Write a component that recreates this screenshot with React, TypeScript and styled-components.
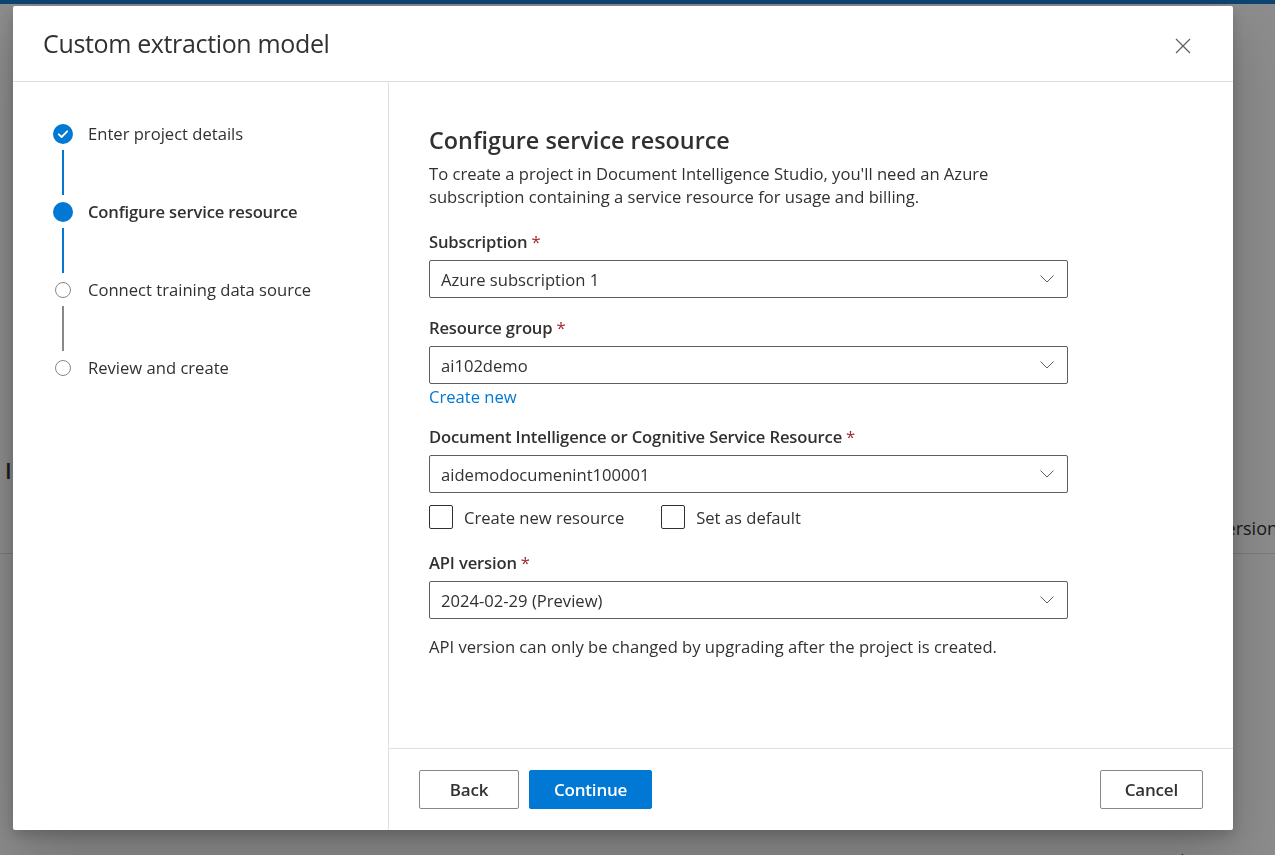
import React from "react";
import styled, { createGlobalStyle } from "styled-components";

const FONT = `"Open Sans", "Noto Sans", "Liberation Sans", sans-serif`;

const GlobalStyle = createGlobalStyle`
  html, body {
    margin: 0;
    padding: 0;
    overflow: hidden;
    font-family: ${FONT};
    color: #323130;
  }
  * { box-sizing: border-box; }
`;

/* ---------- background page (behind the modal) ---------- */
const Page = styled.div`
  width: 100vw;
  min-height: 869px;
  background: #ffffff;
  display: flex;
  flex-direction: column;
  overflow: hidden;
`;

const TopBar = styled.div`
  height: 4px;
  flex: none;
  background: #1a7bd0;
`;

const PageMain = styled.main`
  flex: 1;
  display: flex;
  flex-direction: column;
  padding-top: 451px;
`;

const PageHeading = styled.h2`
  margin: 0 0 0 5px;
  font-size: 22px;
  line-height: 30px;
  font-weight: 600;
  color: #323130;
`;

const TableHead = styled.div`
  margin-top: 18px;
  width: 1300px;
  height: 51px;
  display: flex;
  align-items: center;
  justify-content: flex-end;
  padding-right: 22px;
  border-bottom: 1px solid #e1dfdd;
  font-size: 18px;
  color: #323130;
`;

const PageFooter = styled.footer`
  height: 20px;
  flex: none;
  display: flex;
  justify-content: flex-end;
  font-size: 15px;
  line-height: 20px;
  color: #323130;
  width: 1310px;
`;

/* ---------- modal ---------- */
const Overlay = styled.div`
  position: fixed;
  inset: 0;
  background: rgba(0, 0, 0, 0.45);
  display: flex;
  align-items: flex-start;
  padding: 6px 0 0 13px;
`;

const Dialog = styled.div`
  width: 1220px;
  height: 824px;
  background: #ffffff;
  border-radius: 2px;
  display: flex;
  flex-direction: column;
  box-shadow: 0 25px 58px rgba(0, 0, 0, 0.22), 0 5px 14px rgba(0, 0, 0, 0.18);
  overflow: hidden;
`;

const DialogHeader = styled.header`
  height: 76px;
  flex: none;
  display: flex;
  align-items: center;
  justify-content: space-between;
  padding: 0 34px 0 30px;
  border-bottom: 1px solid #e1dfdd;
`;

const DialogTitle = styled.h1`
  margin: 0 0 2px;
  font-size: 25px;
  font-weight: 400;
  color: #323130;
  letter-spacing: -0.35px;
`;

const CloseButton = styled.button`
  width: 32px;
  height: 32px;
  margin-top: 5px;
  border: none;
  background: transparent;
  display: flex;
  align-items: center;
  justify-content: center;
  padding: 0;
  cursor: pointer;
`;

const DialogBody = styled.div`
  flex: 1;
  min-height: 0;
  display: flex;
`;

/* ---------- stepper ---------- */
const Sidebar = styled.nav`
  width: 376px;
  flex: none;
  border-right: 1px solid #e1dfdd;
  padding: 42px 0 0 40px;
  display: flex;
  flex-direction: column;
`;

const Step = styled.div`
  display: flex;
  align-items: flex-start;
  gap: 15px;
`;

const Marker = styled.div`
  width: 20px;
  display: flex;
  flex-direction: column;
  align-items: center;
`;

const Dot = styled.div<{ $state: "done" | "current" | "todo" }>`
  width: 20px;
  height: 20px;
  display: flex;
  align-items: center;
  justify-content: center;
  &::before {
    content: "";
    display: ${(p) => (p.$state === "done" ? "none" : "block")};
    width: ${(p) => (p.$state === "todo" ? "16px" : "20px")};
    height: ${(p) => (p.$state === "todo" ? "16px" : "20px")};
    border-radius: 50%;
    box-sizing: border-box;
    background: ${(p) => (p.$state === "todo" ? "#ffffff" : "#0078d4")};
    border: ${(p) => (p.$state === "todo" ? "1.5px solid #8a8886" : "none")};
  }
`;

const Connector = styled.div<{ $active: boolean }>`
  width: 2px;
  height: 45px;
  margin: 6px 0 7px;
  background: ${(p) => (p.$active ? "#0078d4" : "#8a8886")};
`;

const StepLabel = styled.span<{ $current?: boolean }>`
  font-size: 16.6px;
  line-height: 20px;
  font-weight: ${(p) => (p.$current ? 600 : 400)};
  letter-spacing: ${(p) => (p.$current ? "-0.15px" : "0")};
  color: #323130;
`;

/* ---------- form pane ---------- */
const Pane = styled.section`
  flex: 1;
  display: flex;
  flex-direction: column;
  min-width: 0;
`;

const Content = styled.div`
  flex: 1;
  padding: 42px 40px 0 40px;
  display: flex;
  flex-direction: column;
  align-items: flex-start;
`;

const SectionTitle = styled.h2`
  margin: 0;
  font-size: 23.4px;
  line-height: 32px;
  font-weight: 600;
  color: #323130;
`;

const Description = styled.p`
  margin: 6px 0 0;
  width: 620px;
  font-size: 16.6px;
  line-height: 23px;
  color: #323130;
`;

const Label = styled.label<{ $gap: number }>`
  display: block;
  margin-top: ${(p) => p.$gap}px;
  font-size: 16.6px;
  line-height: 24px;
  font-weight: 600;
  letter-spacing: -0.15px;
  color: #323130;
`;

const Required = styled.span`
  color: #a4262c;
  margin-left: 4px;
  font-weight: 400;
`;

const Select = styled.div`
  margin-top: 6px;
  width: 639px;
  height: 38px;
  border: 1px solid #605e5c;
  border-radius: 2px;
  display: flex;
  align-items: center;
  justify-content: space-between;
  padding: 0 12px 0 11px;
  font-size: 16.6px;
  color: #323130;
`;

const Link = styled.a`
  margin-top: 1px;
  font-size: 16.6px;
  line-height: 24px;
  color: #0078d4;
  text-decoration: none;
`;

const CheckRow = styled.div`
  margin-top: 12px;
  display: flex;
  gap: 37px;
`;

const CheckItem = styled.label`
  display: flex;
  align-items: center;
  gap: 11px;
  font-size: 16.6px;
  color: #323130;
`;

const Box = styled.span`
  width: 24px;
  height: 24px;
  border: 1px solid #323130;
  border-radius: 2px;
  background: #fff;
`;

const Note = styled.p`
  margin: 16px 0 0;
  font-size: 16.6px;
  line-height: 24px;
  color: #323130;
`;

const Footer = styled.footer`
  height: 82px;
  flex: none;
  border-top: 1px solid #e1dfdd;
  display: flex;
  align-items: flex-start;
  gap: 10px;
  padding: 21px 30px 0;
`;

const Button = styled.button<{ $primary?: boolean; $push?: boolean }>`
  height: 39px;
  min-width: 100px;
  padding: 0 24px;
  border-radius: 2px;
  border: 1px solid ${(p) => (p.$primary ? "#0078d4" : "#8a8886")};
  background: ${(p) => (p.$primary ? "#0078d4" : "#ffffff")};
  color: ${(p) => (p.$primary ? "#ffffff" : "#323130")};
  font-family: ${FONT};
  font-size: 17px;
  font-weight: 600;
  letter-spacing: -0.2px;
  margin-left: ${(p) => (p.$push ? "auto" : "0")};
  cursor: pointer;
`;

const Chevron = () => (
  <svg width="16" height="16" viewBox="0 0 16 16" fill="none">
    <path d="M1.5 4.5L8 11L14.5 4.5" stroke="#605e5c" strokeWidth="1" />
  </svg>
);

const CloseIcon = () => (
  <svg width="16" height="16" viewBox="0 0 16 16" fill="none">
    <path d="M1 1L15 15M15 1L1 15" stroke="#605e5c" strokeWidth="1.2" />
  </svg>
);

const CheckIcon = () => (
  <svg width="20" height="20" viewBox="0 0 20 20">
    <circle cx="10" cy="10" r="10" fill="#0078d4" />
    <path d="M5.8 10.3L8.6 13L14.2 7.3" stroke="#fff" strokeWidth="1.8" fill="none" strokeLinecap="round" strokeLinejoin="round" />
  </svg>
);

type StepDef = { label: string; state: "done" | "current" | "todo" };
const steps: StepDef[] = [
  { label: "Enter project details", state: "done" },
  { label: "Configure service resource", state: "current" },
  { label: "Connect training data source", state: "todo" },
  { label: "Review and create", state: "todo" },
];

export default function App() {
  return (
    <>
      <GlobalStyle />
      <Page>
        <TopBar />
        <PageMain>
          <PageHeading>Information</PageHeading>
          <TableHead>Version</TableHead>
        </PageMain>
        <PageFooter>Privacy &amp; cookies&nbsp;&nbsp;&nbsp;Terms of use</PageFooter>
      </Page>
      <Overlay>
        <Dialog role="dialog" aria-label="Custom extraction model">
          <DialogHeader>
            <DialogTitle>Custom extraction model</DialogTitle>
            <CloseButton aria-label="Close">
              <CloseIcon />
            </CloseButton>
          </DialogHeader>
          <DialogBody>
            <Sidebar>
              {steps.map((s, i) => (
                <Step key={s.label}>
                  <Marker>
                    <Dot $state={s.state}>{s.state === "done" && <CheckIcon />}</Dot>
                    {i < steps.length - 1 && <Connector $active={s.state !== "todo"} />}
                  </Marker>
                  <StepLabel $current={s.state === "current"}>{s.label}</StepLabel>
                </Step>
              ))}
            </Sidebar>
            <Pane>
              <Content>
                <SectionTitle>Configure service resource</SectionTitle>
                <Description>
                  To create a project in Document Intelligence Studio, you'll need an Azure
                  subscription containing a service resource for usage and billing.
                </Description>

                <Label $gap={22}>
                  Subscription<Required>*</Required>
                </Label>
                <Select>
                  <span>Azure subscription 1</span>
                  <Chevron />
                </Select>

                <Label $gap={18}>
                  Resource group<Required>*</Required>
                </Label>
                <Select>
                  <span>ai102demo</span>
                  <Chevron />
                </Select>
                <Link href="#">Create new</Link>

                <Label $gap={16}>
                  Document Intelligence or Cognitive Service Resource<Required>*</Required>
                </Label>
                <Select>
                  <span>aidemodocumenint100001</span>
                  <Chevron />
                </Select>
                <CheckRow>
                  <CheckItem>
                    <Box />
                    Create new resource
                  </CheckItem>
                  <CheckItem>
                    <Box />
                    Set as default
                  </CheckItem>
                </CheckRow>

                <Label $gap={22}>
                  API version<Required>*</Required>
                </Label>
                <Select>
                  <span>2024-02-29 (Preview)</span>
                  <Chevron />
                </Select>
                <Note>API version can only be changed by upgrading after the project is created.</Note>
              </Content>
              <Footer>
                <Button>Back</Button>
                <Button $primary>Continue</Button>
                <Button $push>Cancel</Button>
              </Footer>
            </Pane>
          </DialogBody>
        </Dialog>
      </Overlay>
    </>
  );
}
